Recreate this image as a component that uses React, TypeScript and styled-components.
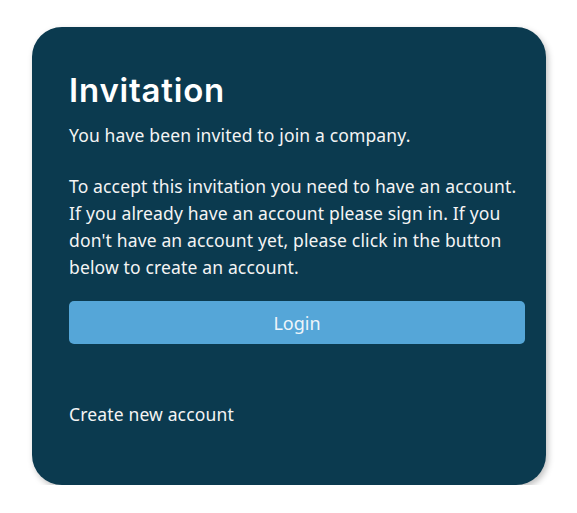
import React from "react";
import styled, { createGlobalStyle } from "styled-components";

const Global = createGlobalStyle`
  html, body { margin: 0; padding: 0; background: #ffffff; }
  body { font-family: "Noto Sans", "Liberation Sans", sans-serif; }
`;

const Page = styled.div`
  padding: 27px 0 0 32px;
`;

const Card = styled.section`
  box-sizing: border-box;
  width: 514px;
  height: 458px;
  background: #0b3a4f;
  border-radius: 30px;
  box-shadow: 2px 3px 6px rgba(0, 0, 0, 0.25);
  padding: 44px 21px 0 37px;
  display: flex;
  flex-direction: column;
  color: #ffffff;
`;

const Title = styled.h1`
  margin: 0;
  font-family: Inter, "Open Sans", sans-serif;
  font-weight: 600;
  font-size: 33px;
  line-height: 38px;
  letter-spacing: 0.8px;
`;

const Text = styled.p<{ $top: number }>`
  margin: ${(p) => p.$top}px 0 0 0;
  font-size: 17.5px;
  line-height: 27px;
  letter-spacing: 0.15px;
  color: #f4f4f4;
`;

const LoginButton = styled.button`
  margin-top: 20px;
  height: 43px;
  width: 100%;
  border: none;
  border-radius: 5px;
  background: #55a6d8;
  color: #eef5fa;
  font-family: "Noto Sans", sans-serif;
  font-size: 18px;
  cursor: pointer;
`;

const CreateLink = styled.a`
  margin-top: 58px;
  font-size: 17.5px;
  line-height: 24px;
  letter-spacing: 0.15px;
  color: #f4f4f4;
  text-decoration: none;
`;

export default function App() {
  return (
    <>
      <Global />
      <Page>
        <Card>
          <Title>Invitation</Title>
          <Text $top={13}>You have been invited to join a company.</Text>
          <Text $top={24}>
            To accept this invitation you need to have an account. If you already have an account please sign in. If you don't have an account yet, please click in the button below to create an account.
          </Text>
          <LoginButton>Login</LoginButton>
          <CreateLink href="#">Create new account</CreateLink>
        </Card>
      </Page>
    </>
  );
}
